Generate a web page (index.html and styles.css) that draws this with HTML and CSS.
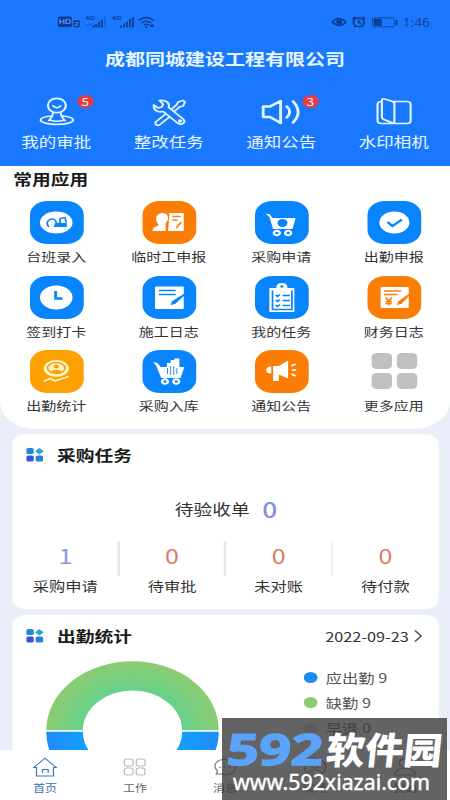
FILE: index.html
```html
<!DOCTYPE html>
<html lang="zh-CN">
<head>
<meta charset="utf-8">
<title>首页</title>
<link rel="stylesheet" href="styles.css">
</head>
<body>
<div class="app">
  <header class="header">
    <div class="status">
      <svg class="status-left" width="82" height="14" viewBox="0 0 82 14">
        <rect x="0" y="1.500" width="11.500" height="10.500" rx="1.500"/>
        <text class="hd" x="1" y="9.500">HD</text>
        <rect x="12.800" y="5.200" width="5" height="7" rx="1"/>
        <text class="hd tiny" x="13.700" y="11">2</text>
        <text class="net" x="22" y="5.500">4G</text>
        <path d="M28 10h1.500v2.500H28zM30.200 9h1.500v3.500h-1.500zM32.500 7h1.500v5.500h-1.500zM34.800 4.500h1.500v8h-1.500z"/>
        <path opacity=".35" d="M37.200 2h1.500v10.500h-1.500zM23 9h4v1.500h-4z"/>
        <text class="net" x="43.500" y="5.500">4G</text>
        <path d="M50 10.500h1.500v2H50zM52.400 8.500h1.500v4h-1.500zM54.800 6.500h1.500v6h-1.500zM57.200 4h1.500v8.500h-1.500zM59.600 2h1.500v10.500h-1.500z"/>
        <path class="ln" d="M65 5.500q6-6 12 0M67 8q4-3.800 8 0M69 10.200q2-2 4 0"/>
        <circle cx="71" cy="12" r="1"/><path d="M74 9.500h3v2.500h-3z"/>
      </svg>
      <svg class="status-right" width="82" height="15" viewBox="0 0 82 15">
        <path class="ln" d="M.8 7q5-7 11 0q-5.500 7-11 0z"/><circle cx="6.300" cy="7" r="2.400"/>
        <circle class="ln" cx="22" cy="7.300" r="4.300"/><path class="ln" d="M22 5v2.500l2 1.500M16.800 4.200l2.500-2.400M27.200 4.200l-2.500-2.400M18.500 12l1-1M25.500 12l-1-1"/>
        <rect class="thin" x="33" y="2.800" width="17.500" height="9" rx="1"/><path d="M34 3.800h6.500v7H34zM51.500 5h1.500v5h-1.500z"/>
        <text class="time" x="57" y="11.500" textLength="22" lengthAdjust="spacingAndGlyphs">1:46</text>
      </svg>
    </div>
    <h1 class="company">成都同城建设工程有限公司</h1>
    <nav class="quick">
      <div class="quick-item">
        <svg width="30" height="30" viewBox="0 0 30 30"><circle cx="15.500" cy="8.500" r="7.200"/><path d="M12.500 9q3 3.500 6 0M12.500 15.500q-.5 5-3.500 8M18.500 15.500q.5 5 3.500 8M11 19c-5 .5-8.500 2-8.500 4 0 2.500 5.500 4.300 13 4.300s13-1.800 13-4.300c0-2-3.500-3.500-8.500-4M9.500 23q6 2.500 12 0"/></svg>
        <span class="badge">5</span><span>我的审批</span>
      </div>
      <div class="quick-item">
        <svg width="30" height="30" viewBox="0 0 30 30"><path d="M7.500 3.500l3 3.500-1 3-3 1-3.500-3c-.5 5 3 8 7.500 6.500L22 26c4 3 7-1 4.500-4L15 10.500c1-5-3-8-7.500-7zM17.500 12l4-4.500 1-2.500 4-1.500 1.500 1.500-1.500 4-3 1-4 4.500M12.500 17l-8 8c-1 2 1 4 3 3l8-8"/><circle cx="24" cy="24" r=".8"/></svg>
        <span>整改任务</span>
      </div>
      <div class="quick-item">
        <svg width="32" height="30" viewBox="0 0 32 30"><path class="bold" d="M1.500 9.500h5.500l8.500-5.500v22l-8.500-6H1.500zM20.500 9.500q4.500 5.500 0 11M25.500 4.500q8 10.500 0 21"/></svg>
        <span class="badge">3</span><span>通知公告</span>
      </div>
      <div class="quick-item">
        <svg width="30" height="30" viewBox="0 0 30 30"><path d="M14 4.500h11.500q3 0 3 3v16q0 3-3 3H5q-3 0-3-3V7.500q0-3 3-3M15.500 4.500v22M5.500 3q0-1.500 2-1L13 4q2.500 1 2.500 3v19.500L8 23q-2.500-1-2.500-3z"/></svg>
        <span>水印相机</span>
      </div>
    </nav>
  </header>

  <section class="panel">
    <h2 class="panel-title">常用应用</h2>
    <div class="grid">
      <div class="tile"><svg class="ic blue" viewBox="0 0 43 43"><ellipse cx="21" cy="21.500" rx="13" ry="11"/><path class="cut line" d="M15 26q-3-5 1-7.500 4-2 5 3l2 2M24 22v-4.500l4-1 1 5"/><path class="cut" d="M20 22h9.500v4H19z"/></svg><span>台班录入</span></div>
      <div class="tile"><svg class="ic orange" viewBox="0 0 43 43"><path d="M15.500 12c4 0 5 3 5 5 0 3-2 4-2 6v7H8q0-4 4-5c2-1 0-2-.5-4-2-5 1-9 4-9zM21.500 12H33v18H20.500z"/><path class="cut line" d="M24 15.500h6.500M24 19h4M31 21l-4 6"/></svg><span>临时工申报</span></div>
      <div class="tile"><svg class="ic blue" viewBox="0 0 43 43"><path d="M8.500 12.500l3.500 1 2 3.500h18.500l-2.500 11H14.500l-3-12z"/><circle class="cut" cx="22" cy="22" r="4"/><circle class="wheel" cx="17.500" cy="32" r="2.300"/><circle class="wheel" cx="26.500" cy="32" r="2.300"/></svg><span>采购申请</span></div>
      <div class="tile"><svg class="ic blue" viewBox="0 0 43 43"><ellipse cx="21.500" cy="21.500" rx="12" ry="11"/><path class="cut line heavy" d="M16 21l4 4 7.500-6.500"/></svg><span>出勤申报</span></div>

      <div class="tile"><svg class="ic blue" viewBox="0 0 43 43"><ellipse cx="21" cy="21.500" rx="13" ry="12"/><path class="cut line heavy" d="M20.500 15v7.500H26"/></svg><span>签到打卡</span></div>
      <div class="tile"><svg class="ic blue" viewBox="0 0 43 43"><rect x="10" y="10.500" width="23" height="22.500" rx="1"/><path class="cut line" d="M13 14.500h13.500M13 18.500h13.500"/><path class="cut" d="M34 19l-8 9-3.500 1 1-3.500L34 17z"/></svg><span>施工日志</span></div>
      <div class="tile"><svg class="ic blue" viewBox="0 0 43 43"><path d="M12.500 12H17q0-5 4.500-5t4.500 5h5.500v24h-20V12z"/><path class="cut line" d="M14 14.500v19h15.500v-19M16.500 19l1.500 1.500 2-2M22 19.500h6M16.500 24l1.500 1.500 2-2M22 24.500h6M16.500 29l1.500 1.500 2-2M22 29.500h6"/><circle class="cut" cx="21.500" cy="10.500" r="1.300"/></svg><span>我的任务</span></div>
      <div class="tile"><svg class="ic orange" viewBox="0 0 43 43"><rect x="10.500" y="11" width="22.500" height="21" rx="1"/><path class="cut line" d="M13 15h14M13 18.500h11"/><path class="cut line" d="M14.500 21.500l2.500 3.500 2.500-3.500M17 25v4.500M14.500 25.500h5M14.500 27.500h5"/><path class="cut" d="M34 19l-7 9-3.500 1 1-3.500L34 17z"/></svg><span>财务日志</span></div>

      <div class="tile"><svg class="ic amber" viewBox="0 0 43 43"><ellipse cx="21" cy="18.500" rx="10" ry="8.500"/><ellipse class="cut line" cx="21" cy="18" rx="7" ry="5.500"/><circle class="cut" cx="21" cy="16.500" r="2"/><path class="cut" d="M16 22q5-4.500 10 0-5 2.500-10 0z"/><path class="wave" d="M11 31.500l5-3 4 2.500 11-4.500"/></svg><span>出勤统计</span></div>
      <div class="tile"><svg class="ic blue" viewBox="0 0 43 43"><path d="M8.500 12l3.500 1 2.500 4h5v-4h3v-3h3V8.500h4V17h4l-3 11H15l-4-12z"/><path class="cut fine" d="M20 18v6M22.500 16v9M25 16v9M27.500 18v6"/><circle class="wheel" cx="18" cy="31.500" r="2.300"/><circle class="wheel" cx="27" cy="31.500" r="2.300"/></svg><span>采购入库</span></div>
      <div class="tile"><svg class="ic orange" viewBox="0 0 43 43"><path d="M13 16.500v7q-4 0-4-3.500t4-3.500zM14.500 16H19l7.500-5.500v18L20 25h-1v6h-4.500z"/><path class="ray" d="M29 16l3.500-2M29.500 20H33M29 24l3.500 2"/></svg><span>通知公告</span></div>
      <div class="tile"><svg class="ic more" viewBox="0 0 43 43"><rect x="3.300" y="3" width="16.300" height="16" rx="4"/><rect x="23.500" y="3" width="16.300" height="16" rx="4"/><rect x="3.300" y="23" width="16.300" height="16" rx="4"/><rect x="23.500" y="23" width="16.300" height="16" rx="4"/></svg><span>更多应用</span></div>
    </div>
  </section>

  <section class="card purchase">
    <div class="card-head">
      <svg class="mark" viewBox="0 0 14 14"><rect x="0" y="0" width="6" height="6" rx="1.500" fill="#2088dc"/><path d="M10.500 0L14 3.300 10.500 6.500 7 3.300z" fill="#28a5d0"/><rect x="0" y="7.500" width="6" height="6" rx="1.500" fill="#3652dc"/><rect x="7.500" y="7.500" width="6" height="6" rx="1.500" fill="#2680e0"/></svg>
      <h3>采购任务</h3>
    </div>
    <div class="pending"><span>待验收单</span><b>0</b></div>
    <div class="stats">
      <div class="stat first"><b>1</b><span>采购申请</span></div>
      <div class="stat"><b>0</b><span>待审批</span></div>
      <div class="stat"><b>0</b><span>未对账</span></div>
      <div class="stat"><b>0</b><span>待付款</span></div>
    </div>
  </section>

  <section class="card attendance">
    <div class="card-head">
      <svg class="mark" viewBox="0 0 14 14"><rect x="0" y="0" width="6" height="6" rx="1.500" fill="#2088dc"/><path d="M10.500 0L14 3.300 10.500 6.500 7 3.300z" fill="#28a5d0"/><rect x="0" y="7.500" width="6" height="6" rx="1.500" fill="#3652dc"/><rect x="7.500" y="7.500" width="6" height="6" rx="1.500" fill="#2680e0"/></svg>
      <h3>出勤统计</h3>
      <span class="date">2022-09-23</span>
      <svg class="chev" width="7" height="12" viewBox="0 0 7 12"><path d="M1 .5l5 5.500-5 5.500"/></svg>
    </div>
    <div class="chart">
      <svg width="140" height="140" viewBox="-70 -70 140 140">
        <defs>
          <radialGradient id="g" gradientUnits="userSpaceOnUse" cx="0" cy="0" r="69"><stop offset=".55" stop-color="#64d28c"/><stop offset="1" stop-color="#8ccb72"/></radialGradient>
          <radialGradient id="b" gradientUnits="userSpaceOnUse" cx="0" cy="0" r="69"><stop offset=".55" stop-color="#14a0ff"/><stop offset="1" stop-color="#1e8cfa"/></radialGradient>
        </defs>
        <path fill="url(#g)" d="M-69-.8A69 69 0 0 1 69-.8H39.700A39.700 39.700 0 0 0-39.700-.8z"/>
        <path fill="url(#b)" d="M-69 .8A69 69 0 0 0 69 .8H39.700A39.700 39.700 0 0 1-39.700 .8z"/>
      </svg>
      <ul class="legend">
        <li><i class="dot due"></i>应出勤 9</li>
        <li><i class="dot absent"></i>缺勤 9</li>
        <li><i class="dot early"></i>早退 0</li>
      </ul>
    </div>
  </section>

  <footer class="tabs">
    <div class="tab active"><svg viewBox="0 0 20 20"><path d="M1 10.500L10 1.200l9 9.300h-2.200V19H3.200v-8.500zM8 16v-3.500h4.500V16"/></svg><span>首页</span></div>
    <div class="tab faint"><svg viewBox="0 0 20 20"><rect x="1.500" y="2" width="7" height="7" rx="2"/><rect x="11" y="2" width="7" height="7" rx="2"/><rect x="1.500" y="11" width="7" height="7" rx="2"/><rect x="11" y="11" width="7" height="7" rx="2"/></svg><span>工作</span></div>
    <div class="tab"><svg viewBox="0 0 20 20"><path d="M3 17l1-3C-1 8 4 2.500 9.500 2.500S19 6 18.500 11 12 18.500 8 17zM6 9.500v1.500M10 9.500v1.500M14 9.500v1.500"/></svg><span>消息</span></div>
    <div class="tab"><svg viewBox="0 0 20 20"><circle cx="10" cy="10" r="8.500"/><circle cx="10" cy="8" r="3"/><path d="M4 16q6-7 12 0"/></svg><span>现场</span></div>
    <div class="tab"><svg viewBox="0 0 20 20"><circle cx="10" cy="6" r="4.500"/><path d="M2 18q0-7 8-7t8 7z"/></svg><span>我的</span></div>
  </footer>
</div>

<aside class="watermark">
  <svg width="225" height="82" viewBox="0 0 225 82">
    <text class="wm-num" transform="translate(4 47) skewX(-4)" textLength="96" lengthAdjust="spacingAndGlyphs">592</text>
    <text class="wm-name" transform="translate(103 46) skewX(-6)" textLength="116" lengthAdjust="spacingAndGlyphs">软件园</text>
    <text class="wm-url" x="11" y="72" textLength="197" lengthAdjust="spacingAndGlyphs">www.592xiazai.com</text>
  </svg>
</aside>
</body>
</html>
```
FILE: styles.css
```css
* { box-sizing: border-box; }
html { overflow: hidden; }
body {
  margin: 0;
  width: 450px;
  height: 800px;
  overflow: hidden;
  position: relative;
  background: #fff;
  font-family: "Noto Sans CJK SC", sans-serif;
}
h1, h2, h3, ul { margin: 0; padding: 0; }
svg { display: block; flex: none; }

/* 360-unit wide phone screen stretched over a 450px viewport */
.app {
  width: 360px;
  height: 800px;
  display: flex;
  flex-direction: column;
  overflow: hidden;
  background: #eaeef8;
  color: #333;
  transform: scaleX(1.25);
  transform-origin: 0 0;
}

.header { height: 166px; flex: none; background: #1a78ff; color: #e4f6ff; }
.status {
  height: 44px;
  padding: 15px 13px 0 46px;
  display: flex;
  justify-content: space-between;
  fill: #0d3c91;
}
.ln, .thin { fill: none; stroke: #0d3c91; stroke-width: 1.3; }
.thin { stroke-width: .7; }
.hd { font: bold 7px "Liberation Sans", sans-serif; fill: #4c93f5; }
.tiny { font-size: 6px; }
.net { font: bold 6px "Liberation Sans", sans-serif; }
.time { font: 12px "Noto Sans", sans-serif; fill: #164594; }
.company { height: 28px; line-height: 28px; font-size: 16px; text-align: center; }

.quick { display: grid; grid-template-columns: repeat(4, 1fr); padding-top: 25px; }
.quick-item {
  position: relative;
  display: flex;
  flex-direction: column;
  align-items: center;
  font-size: 14px;
  line-height: 20px;
}
.quick-item svg { margin-bottom: 4px; fill: none; stroke: #dff5ff; stroke-width: 1.700; stroke-linejoin: round; stroke-linecap: round; }
.quick-item .bold { stroke-width: 2.300; }
.badge {
  position: absolute;
  left: 61.500px;
  top: -2.500px;
  width: 13.500px;
  height: 13.500px;
  border-radius: 50%;
  background: #e93b3f;
  font-size: 11px;
  line-height: 13px;
  text-align: center;
}

.panel { height: 263px; flex: none; background: #fff; border-radius: 0 0 28px 28px; }
.panel-title { height: 35px; padding-left: 10.500px; font-size: 15px; line-height: 26px; color: #1c1c1c; }
.grid { display: grid; grid-template-columns: repeat(4, 1fr); grid-auto-rows: 74.500px; }
.tile { display: flex; flex-direction: column; align-items: center; font-size: 12px; line-height: 18px; }
.ic { width: 43px; height: 43px; border-radius: 14px; margin-bottom: 4px; fill: #fff; --c: #0885fc; background: var(--c); }
.orange { --c: #fb7d04; }
.amber { --c: #fda102; fill: #fff3c8; }
.more { background: none; fill: #c0c0c0; }
.cut { fill: var(--c); }
.line { fill: none; stroke: var(--c); stroke-width: 1.400; }
.heavy { stroke-width: 2.300; }
.fine { stroke: var(--c); stroke-width: .8; }
.wheel { fill: none; stroke: #fff; stroke-width: 2; }
.wave { fill: none; stroke: #fff3c8; stroke-width: 1.500; }
.ray { stroke: #fff; stroke-width: 1.700; }

.card { flex: none; margin: 0 9px 0 9.600px; background: #fff; border-radius: 10px; }
.purchase { margin-top: 5px; height: 175px; }
.attendance { margin-top: 6px; height: 200px; }
.card-head { display: flex; align-items: center; height: 42px; padding: 0 13px 0 11px; }
.mark { width: 14px; height: 14px; margin-right: 11px; }
.card-head h3 { font-size: 15px; line-height: 22px; color: #1c1c1c; }
.date { margin-left: auto; font-size: 13px; }
.chev { margin-left: 4px; fill: none; stroke: #555; stroke-width: 1.300; }

.pending {
  height: 65px;
  padding: 1px 0 0 1px;
  display: flex;
  justify-content: center;
  align-items: center;
  gap: 10px;
  font-size: 15px;
  line-height: 30px;
}
.pending b { font-size: 21px; font-weight: 500; color: #8592dc; }
.stats { display: grid; grid-template-columns: repeat(4, 1fr); }
.stat {
  position: relative;
  display: flex;
  flex-direction: column;
  align-items: center;
  font-size: 13px;
  line-height: 19px;
}
.stat b { font-size: 20px; font-weight: 400; line-height: 30px; height: 35px; color: #dc7c62; }
.stat.first b { color: #8b98de; }
.stat + .stat::before { content: ""; position: absolute; left: -1px; top: 0; width: 1.600px; height: 35px; background: #e8e8e8; }

.chart { display: flex; }
.chart svg { margin: 4px 0 0 26px; }
.legend { margin: 8px 0 0 67px; list-style: none; font-size: 13px; line-height: 25px; color: #555; }
.legend li { display: flex; align-items: center; }
.dot { width: 11px; height: 11px; border-radius: 50%; margin-right: 7px; }
.due { background: #1c8cf0; }
.absent { background: #8ccb72; }
.early { background: #ddd; }

.tabs {
  position: absolute;
  left: 0;
  right: 0;
  bottom: 0;
  height: 50px;
  padding-top: 7px;
  background: #fff;
  display: grid;
  grid-template-columns: repeat(5, 1fr);
}
.tab { display: flex; flex-direction: column; align-items: center; font-size: 9.700px; line-height: 14px; color: #666; }
.tab svg { width: 20px; height: 20px; margin-bottom: 4px; fill: none; stroke: #777; stroke-width: 1; }
.tab.faint svg { stroke: #bbb; }
.tab.active { color: #3671ae; }
.tab.active svg { stroke: #3b78b8; }

.watermark { position: absolute; left: 222px; top: 718px; width: 225px; height: 82px; background: rgba(60, 60, 60, .8); }
.wm-num { font: bold 43px "Open Sans", sans-serif; fill: #5ba3f8; stroke: #5ba3f8; stroke-width: 1.500; }
.wm-name { font: 900 37px "Noto Sans CJK SC", sans-serif; fill: #fff; }
.wm-url { font: 21px "Noto Sans", sans-serif; fill: #fff; stroke: #fff; stroke-width: .4; }
```
